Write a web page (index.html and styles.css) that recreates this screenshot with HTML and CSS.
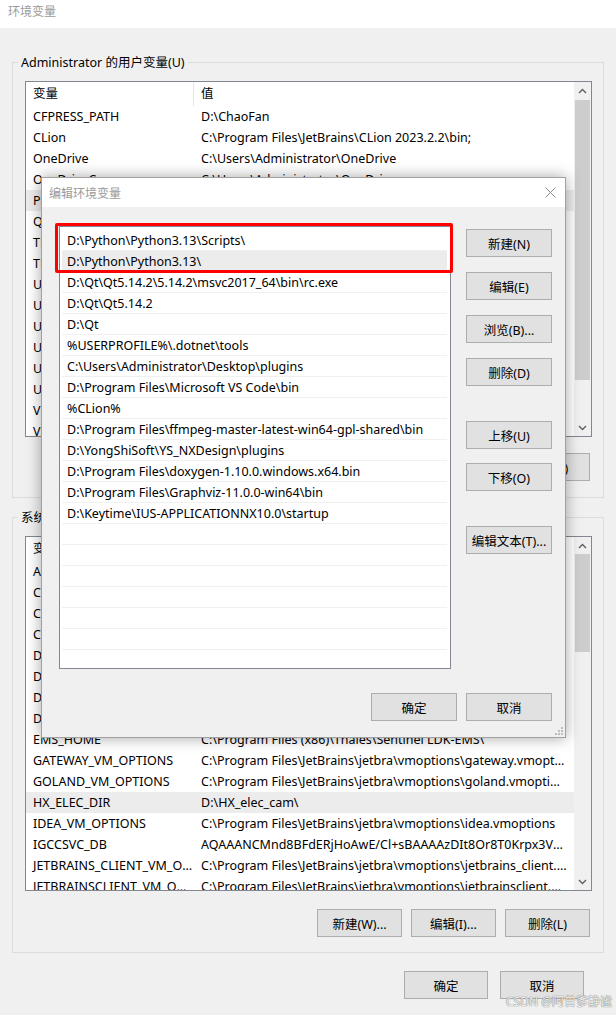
FILE: index.html
```html
<!DOCTYPE html>
<html lang="zh-CN">
<head>
    <meta charset="UTF-8">
    <meta name="viewport" content="width=device-width, initial-scale=1.0">
    <title>环境变量</title>
    <link rel="stylesheet" href="styles.css">
</head>
<body>
    <div class="titlebar">环境变量</div>

    <div class="main">
        <div class="group">
            <div class="group-title">Administrator 的用户变量(U)</div>
            <div class="listview user-list">
                <div class="lv-main">
                    <div class="lv-head"><div class="c1">变量</div><div class="c2">值</div></div>
                    <div class="lv-row"><div class="c1">CFPRESS_PATH</div><div class="c2">D:\ChaoFan</div></div>
                    <div class="lv-row"><div class="c1">CLion</div><div class="c2">C:\Program Files\JetBrains\CLion 2023.2.2\bin;</div></div>
                    <div class="lv-row"><div class="c1">OneDrive</div><div class="c2">C:\Users\Administrator\OneDrive</div></div>
                    <div class="lv-row"><div class="c1">OneDriveConsumer</div><div class="c2">C:\Users\Administrator\OneDrive</div></div>
                    <div class="lv-row selected"><div class="c1">Path</div><div class="c2">D:\Python\Python3.13\Scripts\;D:\Python\Python3.13\</div></div>
                    <div class="lv-row"><div class="c1">QTDIR</div><div class="c2">D:\Qt\Qt5.14.2</div></div>
                    <div class="lv-row"><div class="c1">TEMP</div><div class="c2">%USERPROFILE%\AppData\Local\Temp</div></div>
                    <div class="lv-row"><div class="c1">TMP</div><div class="c2">%USERPROFILE%\AppData\Local\Temp</div></div>
                    <div class="lv-row"><div class="c1">UGII_BASE_DIR</div><div class="c2">D:\Siemens\NX</div></div>
                    <div class="lv-row"><div class="c1">UGII_LANG</div><div class="c2">simpl_chinese</div></div>
                    <div class="lv-row"><div class="c1">UGII_ROOT_DIR</div><div class="c2">D:\Siemens\NX\UGII\</div></div>
                    <div class="lv-row"><div class="c1">UGII_TMP_DIR</div><div class="c2">D:\Siemens\NX\tmp</div></div>
                    <div class="lv-row"><div class="c1">UGS_LICENSE_BUNDLE</div><div class="c2">ACD11,ACD10</div></div>
                    <div class="lv-row"><div class="c1">UGS_LICENSE_SERVER</div><div class="c2">28000@localhost</div></div>
                    <div class="lv-row"><div class="c1">VBOX_MSI_INSTALL_PATH</div><div class="c2">C:\Program Files\Oracle\VirtualBox\</div></div>
                    <div class="lv-row"><div class="c1">VS140COMNTOOLS</div><div class="c2">D:\VS2015\Common7\Tools\</div></div>
                </div>
                <div class="scrollbar">
                    <div class="sb-arrow">
                        <svg width="9" height="6" viewBox="0 0 9 6"><path d="M1 5 L4.5 1.5 L8 5" fill="none" stroke="#606060" stroke-width="1.4"/></svg>
                    </div>
                    <div class="sb-thumb user-thumb"></div>
                    <div class="sb-space"></div>
                    <div class="sb-arrow">
                        <svg width="9" height="6" viewBox="0 0 9 6"><path d="M1 1 L4.5 4.5 L8 1" fill="none" stroke="#606060" stroke-width="1.4"/></svg>
                    </div>
                </div>
            </div>
            <div class="btn-row">
                <button class="btn">新建(N)...</button>
                <button class="btn">编辑(E)...</button>
                <button class="btn">删除(D)</button>
            </div>
        </div>

        <div class="group system">
            <div class="group-title">系统变量(S)</div>
            <div class="listview system-list">
                <div class="lv-main">
                    <div class="lv-head"><div class="c1">变量</div><div class="c2">值</div></div>
                    <div class="lv-row"><div class="c1">ACSvcPort</div><div class="c2">17532</div></div>
                    <div class="lv-row"><div class="c1">CLASSPATH</div><div class="c2">.;%JAVA_HOME%\lib</div></div>
                    <div class="lv-row"><div class="c1">CLION_VM_OPTIONS</div><div class="c2">C:\Program Files\JetBrains\jetbra\vmoptions\clion.vmoptions</div></div>
                    <div class="lv-row"><div class="c1">ComSpec</div><div class="c2">C:\Windows\system32\cmd.exe</div></div>
                    <div class="lv-row"><div class="c1">DATAGRIP_VM_OPTIONS</div><div class="c2">C:\Program Files\JetBrains\jetbra\vmoptions\datagrip.vmoptions</div></div>
                    <div class="lv-row"><div class="c1">DATASPELL_VM_OPTIONS</div><div class="c2">C:\Program Files\JetBrains\jetbra\vmoptions\dataspell.vmoptions</div></div>
                    <div class="lv-row"><div class="c1">DEVECOSTUDIO_VM_OPTIONS</div><div class="c2">C:\Program Files\JetBrains\jetbra\vmoptions\devecostudio.vmoptions</div></div>
                    <div class="lv-row"><div class="c1">DriverData</div><div class="c2">C:\Windows\System32\Drivers\DriverData</div></div>
                    <div class="lv-row"><div class="c1">EMS_HOME</div><div class="c2">C:\Program Files (x86)\Thales\Sentinel LDK-EMS\</div></div>
                    <div class="lv-row"><div class="c1">GATEWAY_VM_OPTIONS</div><div class="c2">C:\Program Files\JetBrains\jetbra\vmoptions\gateway.vmoptions</div></div>
                    <div class="lv-row"><div class="c1">GOLAND_VM_OPTIONS</div><div class="c2">C:\Program Files\JetBrains\jetbra\vmoptions\goland.vmoptions</div></div>
                    <div class="lv-row selected"><div class="c1">HX_ELEC_DIR</div><div class="c2">D:\HX_elec_cam\</div></div>
                    <div class="lv-row"><div class="c1">IDEA_VM_OPTIONS</div><div class="c2">C:\Program Files\JetBrains\jetbra\vmoptions\idea.vmoptions</div></div>
                    <div class="lv-row"><div class="c1">IGCCSVC_DB</div><div class="c2">AQAAANCMnd8BFdERjHoAwE/Cl+sBAAAAzDIt8Or8T0Krpx3VwQ7yQ</div></div>
                    <div class="lv-row"><div class="c1">JETBRAINS_CLIENT_VM_OPTIONS</div><div class="c2">C:\Program Files\JetBrains\jetbra\vmoptions\jetbrains_client.vmoptions</div></div>
                    <div class="lv-row"><div class="c1">JETBRAINSCLIENT_VM_OPTIONS</div><div class="c2">C:\Program Files\JetBrains\jetbra\vmoptions\jetbrainsclient.vmoptions</div></div>
                </div>
                <div class="scrollbar">
                    <div class="sb-arrow">
                        <svg width="9" height="6" viewBox="0 0 9 6"><path d="M1 5 L4.5 1.5 L8 5" fill="none" stroke="#606060" stroke-width="1.4"/></svg>
                    </div>
                    <div class="sb-thumb system-thumb"></div>
                    <div class="sb-space"></div>
                    <div class="sb-arrow">
                        <svg width="9" height="6" viewBox="0 0 9 6"><path d="M1 1 L4.5 4.5 L8 1" fill="none" stroke="#606060" stroke-width="1.4"/></svg>
                    </div>
                </div>
            </div>
            <div class="btn-row">
                <button class="btn">新建(W)...</button>
                <button class="btn">编辑(I)...</button>
                <button class="btn">删除(L)</button>
            </div>
        </div>

        <div class="footer">
            <button class="btn">确定</button>
            <button class="btn">取消</button>
        </div>
    </div>

    <!-- 编辑环境变量 dialog on top of the main window -->
    <div class="dialog">
        <div class="dlg-title">
            <span>编辑环境变量</span>
            <svg width="11" height="11" viewBox="0 0 11 11"><path d="M0.5 0.5 L10.5 10.5 M10.5 0.5 L0.5 10.5" stroke="#8a8a8a" stroke-width="1"/></svg>
        </div>
        <div class="dlg-body">
            <div class="path-list">
                <div class="path-row">D:\Python\Python3.13\Scripts\</div>
                <div class="path-row selected">D:\Python\Python3.13\</div>
                <div class="path-row">D:\Qt\Qt5.14.2\5.14.2\msvc2017_64\bin\rc.exe</div>
                <div class="path-row">D:\Qt\Qt5.14.2</div>
                <div class="path-row">D:\Qt</div>
                <div class="path-row">%USERPROFILE%\.dotnet\tools</div>
                <div class="path-row">C:\Users\Administrator\Desktop\plugins</div>
                <div class="path-row">D:\Program Files\Microsoft VS Code\bin</div>
                <div class="path-row">%CLion%</div>
                <div class="path-row">D:\Program Files\ffmpeg-master-latest-win64-gpl-shared\bin</div>
                <div class="path-row">D:\YongShiSoft\YS_NXDesign\plugins</div>
                <div class="path-row">D:\Program Files\doxygen-1.10.0.windows.x64.bin</div>
                <div class="path-row">D:\Program Files\Graphviz-11.0.0-win64\bin</div>
                <div class="path-row">D:\Keytime\IUS-APPLICATIONNX10.0\startup</div>
                <div class="path-row"></div>
                <div class="path-row"></div>
                <div class="path-row"></div>
                <div class="path-row"></div>
                <div class="path-row"></div>
                <div class="path-row"></div>
                <div class="path-row"></div>
                <div class="highlight"></div>
            </div>
            <div class="dlg-buttons">
                <button class="btn">新建(N)</button>
                <button class="btn">编辑(E)</button>
                <button class="btn">浏览(B)...</button>
                <button class="btn">删除(D)</button>
                <button class="btn far">上移(U)</button>
                <button class="btn near">下移(O)</button>
                <button class="btn far">编辑文本(T)...</button>
            </div>
        </div>
        <div class="dlg-foot">
            <button class="btn">确定</button>
            <button class="btn">取消</button>
        </div>
        <svg class="grip" width="8" height="8" viewBox="0 0 8 8">
            <rect x="6" y="0" width="2" height="2" fill="#bcbcbc"/>
            <rect x="3" y="3" width="2" height="2" fill="#bcbcbc"/>
            <rect x="6" y="3" width="2" height="2" fill="#bcbcbc"/>
            <rect x="0" y="6" width="2" height="2" fill="#bcbcbc"/>
            <rect x="3" y="6" width="2" height="2" fill="#bcbcbc"/>
            <rect x="6" y="6" width="2" height="2" fill="#bcbcbc"/>
        </svg>
    </div>

    <div class="watermark">CSDN @阿曾爹静谧</div>
</body>
</html>
```

FILE: styles.css
```css
* {
    margin: 0;
    padding: 0;
    box-sizing: border-box;
}
body {
    position: relative;
    width: 616px;
    height: 1015px;
    overflow: hidden;
    background: #f0f0f0;
    color: #000;
    font-family: "Noto Sans", "Noto Sans CJK SC", sans-serif;
    font-size: 12.5px;
}
.titlebar {
    height: 28px;
    line-height: 24px;
    padding-left: 8px;
    background: #fff;
    color: #9a9a9a;
    font-size: 12px;
}
.main {
    padding: 0 12px;
}
.group {
    margin-top: 34px;
    padding: 0 11px 16px 12px;
    border: 1px solid #dcdcdc;
}
.group.system {
    margin-top: 19px;
    padding-bottom: 15px;
}
.group-title {
    width: fit-content;
    height: 17px;
    line-height: 17px;
    margin: -9px 0 0 -7px;
    padding: 0 3px;
    background: #f0f0f0;
    white-space: nowrap;
}
.listview {
    display: flex;
    margin-top: 10px;
    border: 1px solid #828790;
    background: #fff;
}
.user-list {
    height: 356px;
}
.system-list {
    height: 355px;
}
.lv-main {
    flex: 1;
    overflow: hidden;
}
.lv-head,
.lv-row {
    display: flex;
    white-space: nowrap;
}
.lv-head {
    height: 24px;
    line-height: 24px;
}
.lv-row {
    height: 21px;
    line-height: 22px;
}
.lv-row.selected {
    background: #ececec;
}
.c1 {
    width: 168px;
    flex-shrink: 0;
    padding: 0 1px 0 7px;
    overflow: hidden;
    text-overflow: ellipsis;
}
.lv-head .c1 {
    border-right: 1px solid #e5e5e5;
}
.c2 {
    flex: 1;
    min-width: 0;
    padding: 0 7px 0 7px;
    overflow: hidden;
    text-overflow: ellipsis;
}
.scrollbar {
    display: flex;
    flex-direction: column;
    width: 17px;
    background: #f0f0f0;
}
.sb-arrow {
    display: flex;
    align-items: center;
    justify-content: center;
    height: 17px;
}
.sb-thumb {
    margin: 0 1px;
    background: #cdcdcd;
}
.user-thumb {
    margin-top: 1px;
    height: 280px;
}
.system-thumb {
    height: 98px;
}
.sb-space {
    flex: 1;
}
.btn {
    height: 28px;
    border: 1px solid #adadad;
    background: #e1e1e1;
    color: #000;
    font-family: inherit;
    font-size: 12.5px;
    white-space: nowrap;
}
.btn-row {
    display: flex;
    justify-content: flex-end;
    gap: 9px;
    margin-top: 16px;
    padding-right: 2px;
}
.system .btn-row {
    margin-top: 18px;
}
.btn-row .btn {
    width: 85px;
}
.footer {
    display: flex;
    justify-content: flex-end;
    gap: 12px;
    margin: 18px 20px 0 0;
}
.footer .btn {
    width: 84px;
}

/* dialog */
.dialog {
    position: absolute;
    left: 41px;
    top: 177px;
    width: 525px;
    background: #f0f0f0;
    border: 1px solid #a0a0a0;
    box-shadow: 0 0 14px rgba(0, 0, 0, 0.35);
}
.dlg-title {
    display: flex;
    align-items: center;
    justify-content: space-between;
    height: 29px;
    padding: 0 9px 0 7px;
    background: #fff;
    color: #9a9a9a;
    font-size: 12px;
}
.dlg-body {
    display: flex;
    padding: 19px 13px 0 17px;
}
.path-list {
    position: relative;
    width: 392px;
    height: 443px;
    padding: 3px 3px 0 2px;
    border: 1px solid #828790;
    background: #fff;
}
.path-row {
    height: 21px;
    line-height: 21px;
    padding-left: 5px;
    border-bottom: 1px solid #f0f0f0;
    white-space: nowrap;
}
.path-row.selected {
    background: #ececec;
}
.highlight {
    position: absolute;
    left: -5px;
    top: -4px;
    width: 398px;
    height: 50px;
    border: 3px solid #ff0000;
    border-radius: 2px;
}
.dlg-buttons {
    display: flex;
    flex-direction: column;
    gap: 15px;
    margin-left: 15px;
    padding-top: 3px;
}
.dlg-buttons .btn {
    width: 86px;
}
.dlg-buttons .far {
    margin-top: 20px;
}
.dlg-buttons .near {
    margin-top: -1px;
}
.dlg-foot {
    display: flex;
    justify-content: flex-end;
    gap: 9px;
    padding: 24px 13px 16px 0;
}
.dlg-foot .btn {
    width: 86px;
}
.grip {
    position: absolute;
    right: 2px;
    bottom: 2px;
}
.watermark {
    position: absolute;
    right: 4px;
    bottom: 5px;
    color: rgba(255, 255, 255, 0.9);
    text-shadow: 0 0 1px #777, 0 0 1px #777;
    font-size: 12px;
    white-space: nowrap;
}
```
